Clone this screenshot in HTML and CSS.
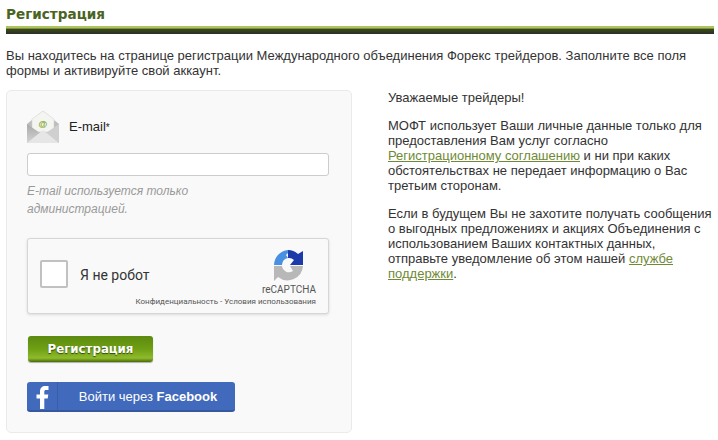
FILE: index.html
```html
<!DOCTYPE html>
<html lang="ru">

<head>
     <meta charset="UTF-8" />
     <title>Регистрация</title>
     <link rel="stylesheet" href="styles.css">
</head>

<body>

     <h1 class="title">Регистрация</h1>

     <p class="intro">Вы находитесь на странице регистрации Международного объединения Форекс трейдеров. Заполните все поля формы и активируйте свой аккаунт.</p>

     <div class="main">
          <div class="panel">
               <div class="field-label">
                    <svg class="mail-icon" width="32" height="33" viewBox="0 0 32 33">
                         <defs>
                              <linearGradient id="mailBody" x1="0" y1="0" x2="0" y2="1">
                                   <stop offset="0" stop-color="#a8a8a8" />
                                   <stop offset="1" stop-color="#d4d4d4" />
                              </linearGradient>
                         </defs>
                         <path d="M0 14 L16 1 L32 14 V33 H0 Z" fill="#bdbdbd" />
                         <path d="M5 9 L16 1 L27 9 V22 H5 Z" fill="#f4f5f0" stroke="#d0d0d0" stroke-width="0.5" />
                         <text x="16" y="17" class="mail-at">@</text>
                         <path d="M0 14 L13 23 L0 33 Z" fill="url(#mailBody)" />
                         <path d="M32 14 L19 23 L32 33 Z" fill="#cfcfcf" />
                         <path d="M0 33 L16 20 L32 33 Z" fill="#e6e6e6" />
                    </svg>
                    <label for="email">E-mail<span class="star">*</span></label>
               </div>

               <input type="text" id="email" class="text-input">

               <p class="hint">E-mail используется только администрацией.</p>

               <div class="captcha">
                    <div class="captcha-check"></div>
                    <span class="captcha-text">Я не робот</span>
                    <div class="captcha-brand">
                         <svg width="31" height="32" viewBox="0 0 31 32">
                              <path d="M15 0 A15.5 15.5 0 0 0 1 15 H9 A7 7 0 0 1 15 8 L13 5 L15 3 Z" fill="#4a90e2" />
                              <path d="M15 0 A15.5 15.5 0 0 1 25 4 L30 1 V15 H17 L21 10 A7 7 0 0 0 15 8 Z" fill="#1c3aa9" />
                              <path d="M1 16 H9 A7 7 0 0 0 20 21 L17 16 H30 A15.5 15.5 0 0 1 5 27 L1 31 Z" fill="#b8b8b8" />
                         </svg>
                         <span class="captcha-name">reCAPTCHA</span>
                         <span class="captcha-links">Конфиденциальность - Условия использования</span>
                    </div>
               </div>

               <button class="btn-register">Регистрация</button>

               <button class="btn-facebook">
                    <span class="fb-mark">
                         <svg width="13" height="23" viewBox="0 0 13 23">
                              <path d="M4 23 V12.5 H0.5 V8.5 H4 V5.5 C4 2 6 0 9.5 0 H12.5 V4 H10 C8.8 4 8.3 4.6 8.3 5.8 V8.5 H12.3 L11.7 12.5 H8.3 V23 Z" fill="white" />
                         </svg>
                    </span>
                    <span class="fb-text">Войти через <b>Facebook</b></span>
               </button>
          </div>

          <div class="notes">
               <p>Уважаемые трейдеры!</p>
               <p>МОФТ использует Ваши личные данные только для предоставления Вам услуг согласно <a href="#">Регистрационному соглашению</a> и ни при каких обстоятельствах не передает информацию о Вас третьим сторонам.</p>
               <p>Если в будущем Вы не захотите получать сообщения о выгодных предложениях и акциях Объединения с использованием Ваших контактных данных, отправьте уведомление об этом нашей <a href="#">службе поддержки</a>.</p>
          </div>
     </div>

</body>

</html>
```

FILE: styles.css
```css
* {
     box-sizing: border-box;
     margin: 0;
     padding: 0;
}

body {
     font-family: 'Liberation Sans', Arial, sans-serif;
     font-size: 13px;
     line-height: 15px;
     color: #333;
     background: white;
     padding: 0 4px 0 6px;
}

.title {
     font-family: 'DejaVu Sans', sans-serif;
     font-size: 13.6px;
     line-height: 18px;
     padding-top: 5px;
     height: 26px;
     color: #4b6323;
}

.title::after {
     content: "";
     display: block;
     height: 8px;
     margin-top: 3px;
     background: linear-gradient(#aec45c 0, #aec45c 25%, #3a4a18 40%, #2b2f28 100%);
}

.intro {
     margin-top: 22px;
}

.main {
     display: flex;
     margin-top: 12px;
}

.panel {
     width: 346px;
     height: 343px;
     padding: 19px 22px 0 20px;
     background: #f9f9f9;
     border: 1px solid #eaeaea;
     border-radius: 5px;
}

.field-label {
     display: flex;
     align-items: center;
     gap: 10px;
     height: 33px;
     color: #222;
}

.mail-at {
     font-size: 9px;
     font-weight: bold;
     fill: #7da52a;
     text-anchor: middle;
}

.star {
     font-size: 10px;
}

.text-input {
     display: block;
     width: 302px;
     height: 23px;
     margin-top: 10px;
     background: white;
     border: 1px solid #ccc;
     border-radius: 3px;
}

.hint {
     margin-top: 6px;
     width: 200px;
     font-size: 12px;
     font-style: italic;
     line-height: 18px;
     color: #999;
}

.captcha {
     display: flex;
     align-items: flex-start;
     width: 302px;
     height: 76px;
     margin-top: 20px;
     background: #f9f9f9;
     border: 1px solid #d6d6d6;
     border-radius: 3px;
     box-shadow: 0 1px 3px rgba(0, 0, 0, 0.12);
     position: relative;
}

.captcha-check {
     width: 28px;
     height: 28px;
     margin: 21px 0 0 12px;
     background: white;
     border: 2px solid #c1c1c1;
     border-radius: 2px;
}

.captcha-text {
     margin: 29px 0 0 12px;
     font-family: Roboto, sans-serif;
     font-size: 14px;
     color: #333;
}

.captcha-brand {
     position: absolute;
     top: 11px;
     right: 12px;
     display: flex;
     flex-direction: column;
     align-items: flex-end;
}

.captcha-brand svg {
     margin-right: 12px;
}

.captcha-name {
     margin-top: 2px;
     font-family: Roboto, sans-serif;
     font-size: 10px;
     line-height: 12px;
     color: #555;
}

.captcha-links {
     margin-top: 1px;
     font-family: Roboto, sans-serif;
     font-size: 8px;
     line-height: 10px;
     white-space: nowrap;
     color: #555;
}

.btn-register {
     display: block;
     width: 125px;
     height: 26px;
     margin: 22px 0 0 1px;
     font-family: 'DejaVu Sans', sans-serif;
     font-size: 11.8px;
     font-weight: bold;
     color: white;
     text-shadow: 0 1px 1px #2f4a00;
     background: linear-gradient(#5c8a10, #6f9f14 50%, #8fbb2c 85%, #466a08);
     border: none;
     border-radius: 3px;
     box-shadow: 0 1px 1px rgba(0, 0, 0, 0.3);
}

.btn-facebook {
     display: flex;
     align-items: stretch;
     width: 208px;
     height: 30px;
     margin-top: 20px;
     color: white;
     font-family: 'Liberation Sans', sans-serif;
     font-size: 13px;
     background: #4169bc;
     border: none;
     border-bottom: 2px solid #35589f;
     border-radius: 3px;
     overflow: hidden;
}

.fb-mark {
     display: flex;
     align-items: flex-end;
     justify-content: center;
     width: 31px;
     border-right: 1px solid #3a5eaa;
     padding-bottom: 1px;
}

.fb-text {
     flex: 1;
     line-height: 29px;
     text-align: center;
     padding-left: 3px;
}

.notes {
     width: 326px;
     margin-left: 36px;
}

.notes p {
     margin-bottom: 13px;
}

.notes a {
     color: #6f8a35;
}
```
